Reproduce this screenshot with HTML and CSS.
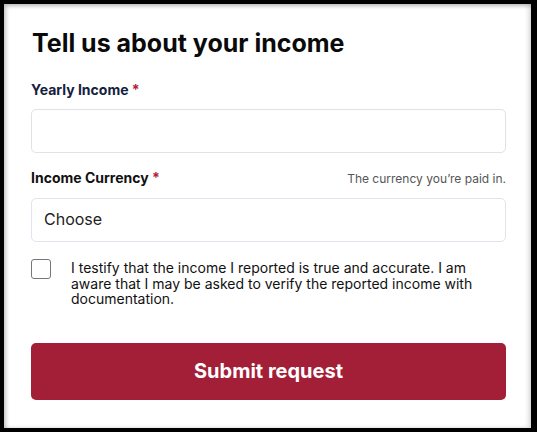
FILE: index.html
```html
<!DOCTYPE html>
<html>
<head>
<meta charset="utf-8">
<link rel="stylesheet" href="styles.css">
</head>
<body>
<div class="panel">
  <h1 class="title">Tell us about your income</h1>
  <div class="field field-first">
    <div class="label-row">
      <label class="label label-navy">Yearly Income <span class="req">*</span></label>
    </div>
    <div class="input"></div>
  </div>
  <div class="field field-second">
    <div class="label-row">
      <label class="label">Income Currency <span class="req">*</span></label>
      <span class="help">The currency you’re paid in.</span>
    </div>
    <div class="input select">Choose</div>
  </div>
  <div class="check-row">
    <span class="checkbox"></span>
    <p class="check-text">I testify that the income I reported is true and accurate. I am aware that I may be asked to verify the reported income with documentation.</p>
  </div>
  <button class="submit">Submit request</button>
</div>
</body>
</html>
```
FILE: styles.css
```css
html, body {
  margin: 0;
  padding: 0;
  background: #000;
}
body {
  padding: 4px 6px 4px 4px;
  font-family: "Inter", "Liberation Sans", sans-serif;
}
.panel {
  background: #fff;
  height: 424px;
  box-sizing: border-box;
  padding: 24px 25px 0 27px;
  box-shadow: inset 2px 2px 4px rgba(0,0,0,0.25), inset -3px 0 4px rgba(0,0,0,0.12);
  display: flex;
  flex-direction: column;
}
.title {
  margin: 0 0 0 1px;
  font-size: 25px;
  line-height: 30px;
  font-weight: 700;
  color: #0a0a0a;
}
.field-first { margin-top: 22px; }
.field-second { margin-top: 15px; }
.label-row {
  display: flex;
  justify-content: space-between;
  align-items: center;
  height: 20px;
}
.label {
  font-size: 14px;
  font-weight: 700;
  color: #111;
  line-height: 20px;
}
.label-navy { color: #14213d; }
.req { color: #b3203a; }
.help {
  font-size: 12px;
  color: #555;
}
.input {
  margin-top: 9px;
  height: 44px;
  box-sizing: border-box;
  border: 1px solid #e1e1ea;
  border-radius: 5px;
  background: #fff;
}
.field-second .input { margin-top: 10px; }
.select {
  padding: 0 0 3px 12px;
  display: flex;
  align-items: center;
  font-size: 16px;
  color: #222;
  border-color: #e0e4ec;
}
.check-row {
  margin-top: 17px;
  display: flex;
  align-items: flex-start;
}
.checkbox {
  width: 20px;
  height: 20px;
  box-sizing: border-box;
  border: 1px solid #777;
  border-radius: 3px;
  flex-shrink: 0;
}
.check-text {
  margin: 1px 0 0 20px;
  font-size: 14px;
  line-height: 15.5px;
  color: #111;
  max-width: 420px;
}
.submit {
  margin-top: 36px;
  height: 57px;
  border: none;
  border-radius: 5px;
  background: #a31f37;
  color: #fff;
  font-family: "Inter", "Liberation Sans", sans-serif;
  font-size: 20px;
  font-weight: 700;
}
```
